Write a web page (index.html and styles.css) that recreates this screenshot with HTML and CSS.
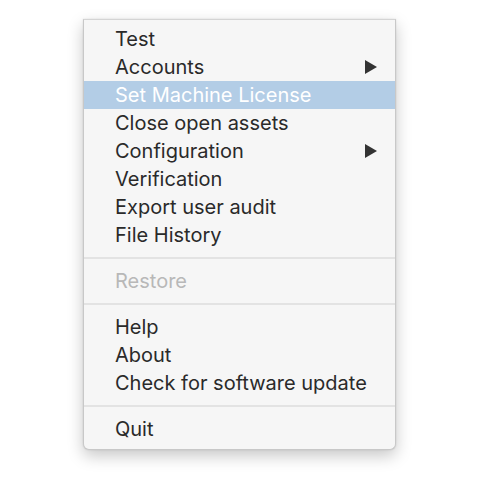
FILE: index.html
```html
<!DOCTYPE html>
<html>
<head>
<meta charset="utf-8">
<link rel="stylesheet" href="styles.css">
</head>
<body>
<div class="page">
  <div class="menu">
    <div class="item">Test</div>
    <div class="item">Accounts<span class="arrow"></span></div>
    <div class="item selected">Set Machine License</div>
    <div class="item">Close open assets</div>
    <div class="item">Configuration<span class="arrow"></span></div>
    <div class="item">Verification</div>
    <div class="item">Export user audit</div>
    <div class="item">File History</div>
    <div class="sep"></div>
    <div class="item disabled">Restore</div>
    <div class="sep"></div>
    <div class="item">Help</div>
    <div class="item">About</div>
    <div class="item">Check for software update</div>
    <div class="sep"></div>
    <div class="item">Quit</div>
  </div>
</div>
</body>
</html>
```
FILE: styles.css
```css
html, body {
  margin: 0;
  padding: 0;
  background: #ffffff;
}
.page {
  width: 480px;
  height: 480px;
  padding-top: 19px;
  padding-left: 83px;
  box-sizing: border-box;
}
.menu {
  width: 313px;
  box-sizing: border-box;
  background: #f6f6f6;
  border: 1px solid #c8c8c8;
  border-top-color: #d4d4d4;
  border-radius: 0 0 6px 6px;
  padding: 5px 0 6px 0;
  box-shadow: 0 6px 16px rgba(0,0,0,0.22), 0 0 2px rgba(0,0,0,0.12);
  font-family: Inter, "Liberation Sans", sans-serif;
  font-size: 20px;
  color: #2a2a2a;
}
.item {
  height: 28px;
  line-height: 28px;
  padding-left: 31px;
  padding-right: 18px;
  display: flex;
  align-items: center;
  justify-content: space-between;
  white-space: nowrap;
}
.selected {
  background: #b3cde6;
  color: #ffffff;
}
.disabled {
  color: #b8b8b8;
}
.sep {
  height: 2px;
  background: #e3e3e3;
  margin: 8px 0 8px 0;
}
.arrow {
  width: 0;
  height: 0;
  border-top: 7px solid transparent;
  border-bottom: 7px solid transparent;
  border-left: 12px solid #333333;
}
```
